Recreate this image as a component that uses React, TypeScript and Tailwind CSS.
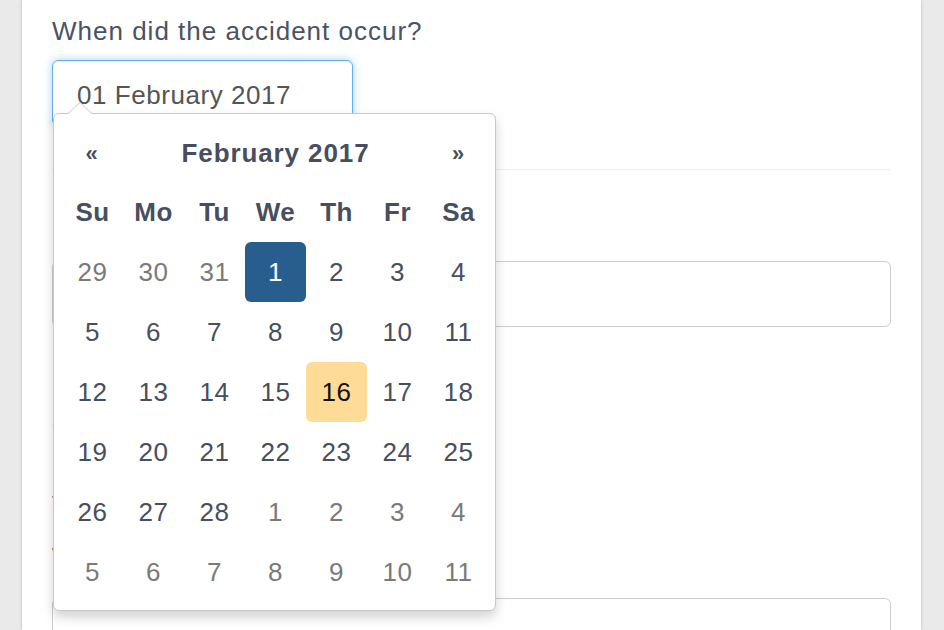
import React from 'react';

type Day = { n: number; muted?: boolean; active?: boolean; today?: boolean };

const weeks: Day[][] = [
  [{ n: 29, muted: true }, { n: 30, muted: true }, { n: 31, muted: true }, { n: 1, active: true }, { n: 2 }, { n: 3 }, { n: 4 }],
  [{ n: 5 }, { n: 6 }, { n: 7 }, { n: 8 }, { n: 9 }, { n: 10 }, { n: 11 }],
  [{ n: 12 }, { n: 13 }, { n: 14 }, { n: 15 }, { n: 16, today: true }, { n: 17 }, { n: 18 }],
  [{ n: 19 }, { n: 20 }, { n: 21 }, { n: 22 }, { n: 23 }, { n: 24 }, { n: 25 }],
  [{ n: 26 }, { n: 27 }, { n: 28 }, { n: 1, muted: true }, { n: 2, muted: true }, { n: 3, muted: true }, { n: 4, muted: true }],
  [5, 6, 7, 8, 9, 10, 11].map((n) => ({ n, muted: true })),
];

const dow = ['Su', 'Mo', 'Tu', 'We', 'Th', 'Fr', 'Sa'];

function DayCell({ day }: { day: Day }) {
  let cls = 'text-[#474f5f]';
  if (day.muted) cls = 'text-[#7a7a7a]';
  if (day.active) cls = 'bg-[#285e8e] text-white';
  if (day.today) cls = 'bg-[#fedb97] text-[#111]';
  return (
    <div className={`flex h-[60px] items-center justify-center rounded-[6px] text-[26px] tracking-[0.6px] ${cls}`}>
      {day.n}
    </div>
  );
}

function Datepicker() {
  return (
    <div className="absolute left-[1px] top-[53px] z-10 w-[443px] rounded-[6px] border border-[#c8c8c8] bg-white p-[8px] shadow-[0_6px_12px_rgba(0,0,0,0.175)]">
      {/* caret */}
      <div className="absolute -top-[12px] left-[13px] h-0 w-0 border-x-[13px] border-b-[12px] border-x-transparent border-b-[#c8c8c8]" />
      <div className="absolute -top-[11px] left-[14px] h-0 w-0 border-x-[12px] border-b-[11px] border-x-transparent border-b-white" />

      <div className="grid grid-cols-[61px_305px_61px] text-[#474f5f]">
        <div className="flex h-[60px] items-center justify-center pr-[2px] pt-[2px] text-[22px] font-bold">«</div>
        <div className="flex h-[60px] items-center justify-center pt-[2px] text-[26px] font-bold tracking-[0.9px]">
          February 2017
        </div>
        <div className="flex h-[60px] items-center justify-center pr-[1px] pt-[2px] text-[22px] font-bold">»</div>
      </div>

      <div className="grid grid-cols-[repeat(7,61px)]">
        {dow.map((d) => (
          <div key={d} className="flex h-[60px] items-center justify-center text-[26px] font-bold tracking-[0.4px] text-[#474f5f]">
            {d}
          </div>
        ))}
        {weeks.flat().map((day, i) => (
          <DayCell key={i} day={day} />
        ))}
      </div>
    </div>
  );
}

export default function App() {
  return (
    <div
      className="min-h-[630px] w-full overflow-hidden bg-[#eaeaea]"
      style={{ fontFamily: '"Liberation Sans", Arial, Helvetica, sans-serif' }}
    >
      <div className="ml-[22px] h-[630px] w-[899px] bg-white px-[30px] pt-[13px] shadow-[0_0_3px_rgba(0,0,0,0.22)]">
        <label className="block text-[26px] leading-[36px] tracking-[1px] text-[#4a5263]">
          When did the accident occur?
        </label>

        <div className="relative mt-[11px]">
          <div className="flex h-[66px] w-[301px] items-center rounded-[6px] border border-[#66afe9] pl-[24px] pt-[5px] text-[26px] tracking-[0.55px] text-[#555] shadow-[inset_0_1px_1px_rgba(0,0,0,0.075),0_0_8px_rgba(102,175,233,0.6)]">
            01 February 2017
          </div>
          <Datepicker />
        </div>

        <hr className="mt-[43px] border-0 border-t border-[#eeeeee]" />

        <label className="mt-[43px] block text-[26px] leading-[36px] text-[#4a5263]">
          Location
        </label>
        <div className="mt-[12px] h-[66px] w-full rounded-[6px] border border-[#cccccc]" />

        <div className="mt-[34px] text-[26px] leading-[40px] text-[#4a5263]">
          <div>Details</div>
          <div>and</div>
          <div className="text-[#2a6496]">Help</div>
          <div>text</div>
        </div>

        <label className="mt-[18px] block text-[26px] leading-[36px] text-[#4a5263]">
          Where
        </label>
        <div className="mt-[23px] h-[66px] w-full rounded-[6px] border border-[#cccccc]" />
      </div>
    </div>
  );
}
